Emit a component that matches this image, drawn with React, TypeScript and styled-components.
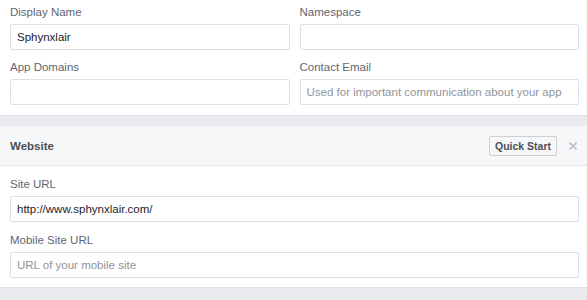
import React from "react";
import styled, { createGlobalStyle } from "styled-components";

const Global = createGlobalStyle`
  html, body { margin: 0; padding: 0; background: #ffffff; }
  body { font-family: "Liberation Sans", Arial, Helvetica, sans-serif; }
  * { box-sizing: border-box; }
`;

const Page = styled.div`
  width: 587px;
  height: 300px;
  overflow: hidden;
  background: #ffffff;
  display: flex;
  flex-direction: column;
  & > * { flex-shrink: 0; }
`;

const Section = styled.div<{ $cols?: number }>`
  display: grid;
  grid-template-columns: ${(p) => (p.$cols === 2 ? "1fr 1fr" : "1fr")};
  column-gap: 10px;
  row-gap: ${(p) => (p.$cols === 2 ? "9px" : "10px")};
  padding: ${(p) => (p.$cols === 2 ? "4px 8px 10px 10px" : "10px 8px 9px 10px")};
  background: #ffffff;
`;

const Field = styled.div`
  display: flex;
  flex-direction: column;
`;

const Label = styled.label`
  font-size: 11.5px;
  line-height: 16px;
  color: #606770;
  margin-bottom: 4px;
`;

const Input = styled.input`
  height: 26px;
  width: 100%;
  border: 1px solid #dddfe2;
  border-radius: 2px;
  padding: 0 6px;
  font-family: "Liberation Sans", Arial, Helvetica, sans-serif;
  font-size: 11.5px;
  color: #1d2129;
  background: #ffffff;
  outline: none;
  &::placeholder { color: #90949c; }
`;

const Band = styled.div<{ $h: number }>`
  height: ${(p) => p.$h}px;
  background: #e9ebee;
  border-top: 1px solid #dddfe2;
`;

const Header = styled.div`
  height: 40px;
  display: flex;
  align-items: center;
  padding: 0 10px 0 10px;
  background: #f6f7f9;
  border-bottom: 1px solid #e5e6e9;
`;

const Title = styled.div`
  flex: 1;
  font-size: 11.5px;
  font-weight: bold;
  color: #4b4f56;
`;

const Button = styled.button`
  height: 20px;
  width: 68px;
  padding: 0;
  border: 1px solid #ced0d4;
  border-radius: 2px;
  background: #f6f7f9;
  font-family: "Liberation Sans", Arial, Helvetica, sans-serif;
  font-size: 10.5px;
  font-weight: bold;
  color: #4b4f56;
  margin-right: 12px;
`;

const Close = styled.svg`
  width: 8px;
  height: 8px;
`;

export default function App() {
  return (
    <Page>
      <Global />
      <Section $cols={2}>
        <Field>
          <Label>Display Name</Label>
          <Input defaultValue="Sphynxlair" />
        </Field>
        <Field>
          <Label>Namespace</Label>
          <Input />
        </Field>
        <Field>
          <Label>App Domains</Label>
          <Input />
        </Field>
        <Field>
          <Label>Contact Email</Label>
          <Input placeholder="Used for important communication about your app" />
        </Field>
      </Section>
      <Band $h={11} />
      <Header>
        <Title>Website</Title>
        <Button>Quick Start</Button>
        <Close viewBox="0 0 8 8">
          <path d="M0.5 0.5 L7.5 7.5 M7.5 0.5 L0.5 7.5" stroke="#bec2c9" strokeWidth="1.6" />
        </Close>
      </Header>
      <Section>
        <Field>
          <Label>Site URL</Label>
          <Input defaultValue="http://www.sphynxlair.com/" />
        </Field>
        <Field>
          <Label>Mobile Site URL</Label>
          <Input placeholder="URL of your mobile site" />
        </Field>
      </Section>
      <Band $h={20} />
    </Page>
  );
}
